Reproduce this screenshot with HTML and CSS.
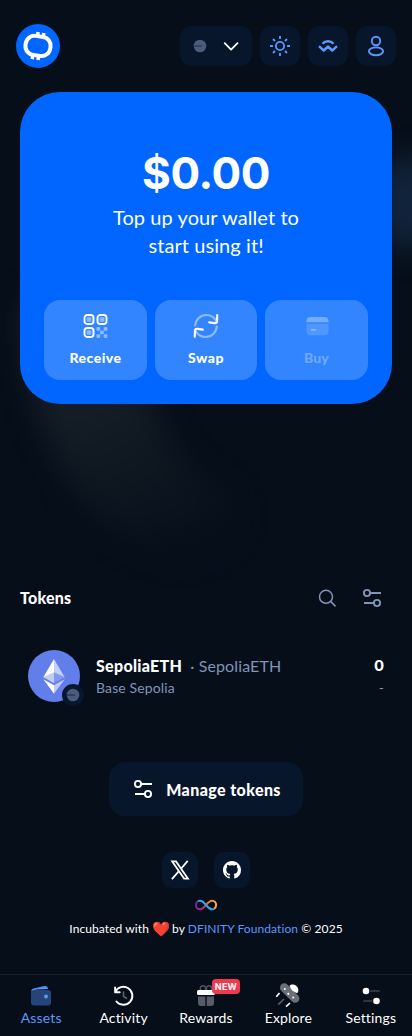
FILE: index.html
```html
<!DOCTYPE html>
<html lang="en">
<head>
<meta charset="utf-8">
<meta name="viewport" content="width=device-width, initial-scale=1">
<title>Wallet</title>
<link rel="stylesheet" href="styles.css">
</head>
<body>
<div class="app">
  <svg class="glow" aria-hidden="true" width="412" height="700" viewBox="0 0 412 700" fill="none">
    <defs>
      <filter id="soft" x="-100%" y="-100%" width="300%" height="300%" color-interpolation-filters="sRGB"><feGaussianBlur stdDeviation="14"/></filter>
      <linearGradient id="fade" gradientUnits="userSpaceOnUse" x1="80" y1="400" x2="150" y2="560"><stop offset="0" stop-color="#151e27"/><stop offset=".45" stop-color="#0f1821"/><stop offset="1" stop-color="#070f1b"/></linearGradient>
    </defs>
    <path d="M20 300H142C140 400 165 460 225 490C265 530 200 580 130 540C60 500 25 410 20 300Z" fill="url(#fade)" filter="url(#soft)"/>
    <ellipse cx="412" cy="203" rx="42" ry="47" fill="#11233a" filter="url(#soft)"/>
  </svg>
  <header class="header">
    <a class="logo" href="#">
      <svg width="44" height="44" viewBox="0 0 44 44" fill="none" stroke="#fff">
        <rect x="9.500" y="12.300" width="25" height="19.200" rx="8.800" transform="rotate(8 22 22)" stroke-width="4"/>
        <path d="M22.100 8L21.500 12.500M27.800 9L27.100 13.500M17 31L16.200 35.200M22.700 31.500L22 36" stroke-width="3.500"/>
      </svg>
    </a>
    <div class="header-actions">
      <button class="chip chip-wide">
        <svg width="22" height="22" viewBox="0 0 22 22"><circle cx="11" cy="11" r="10.500" fill="#08152a" stroke="#0b1a31"/><circle cx="11" cy="11" r="6.300" fill="#4b5b7a"/><path d="M5 11h8" stroke="#2c3b58" stroke-width="1.500"/></svg>
        <svg width="20" height="20" viewBox="0 0 20 20" fill="none" stroke="#fff" stroke-width="1.800" stroke-linecap="round" stroke-linejoin="round"><path d="M3.700 7.200l6.400 6.400 6.400-6.400"/></svg>
      </button>
      <button class="chip">
        <svg width="24" height="24" viewBox="0 0 24 24" fill="none" stroke="#5c97fc" stroke-width="1.900"><circle cx="12" cy="12" r="4.100"/><path d="M12 2v3M12 19v3M2 12h3M19 12h3M5 5l2 2M17 17l2 2M5 19l2-2M17 7l2-2"/></svg>
      </button>
      <button class="chip">
        <svg width="24" height="24" viewBox="0 0 24 24" fill="none" stroke="#5c97fc" stroke-width="2.400" stroke-linejoin="round"><path d="M3 12.200L7.700 16.500L12 12.500L16.300 16.500L21 12.200M6.400 9.700C9.400 6.500 14.600 6.500 17.600 9.700"/></svg>
      </button>
      <button class="chip">
        <svg width="24" height="24" viewBox="0 0 24 24" fill="none" stroke="#5c97fc" stroke-width="1.900"><circle cx="12" cy="7" r="4.200"/><ellipse cx="12" cy="17.300" rx="7.100" ry="3.900"/></svg>
      </button>
    </div>
  </header>

  <section class="hero">
    <div class="balance">$0.00</div>
    <p class="hint">Top up your wallet to<br>start using it!</p>
    <div class="actions">
      <button class="action">
        <svg width="28" height="28" viewBox="0 0 28 28" fill="none"><g stroke="#fff" stroke-width="1.900"><rect x="2.500" y="3" width="9" height="9" rx="2.800"/><rect x="15.500" y="3" width="9" height="9" rx="2.800"/><rect x="2.500" y="16" width="9" height="9" rx="2.800"/></g><g fill="#fff" fill-opacity=".45"><rect x="4.700" y="5.200" width="4.600" height="4.600" rx="1"/><rect x="17.700" y="5.200" width="4.600" height="4.600" rx="1"/><rect x="4.700" y="18.200" width="4.600" height="4.600" rx="1"/><rect x="14.500" y="15" width="3.700" height="3.700" rx=".8"/><rect x="21.700" y="15" width="3.700" height="3.700" rx=".8"/><rect x="18.100" y="18.600" width="3.700" height="3.700" rx=".8"/><rect x="14.500" y="22.200" width="3.700" height="3.700" rx=".8"/><rect x="21.700" y="22.200" width="3.700" height="3.700" rx=".8"/></g></svg>
        <span>Receive</span>
      </button>
      <button class="action">
        <svg width="28" height="28" viewBox="0 0 28 28" fill="none" stroke="#fff" stroke-width="2.200" stroke-linecap="round" stroke-linejoin="round"><path stroke-opacity=".45" d="M3.200 13.500C3.600 7.500 8.500 3 14.300 3C18.700 3 22.500 5.500 24.300 9.200M24.800 14.500C24.400 20.500 19.500 25 13.700 25C9.300 25 5.500 22.500 3.700 18.800"/><path d="M25.200 3.200L25 9.800Q24.700 11.500 22.500 11.200L17.200 10.300M2.800 24.800L3 18.200Q3.300 16.500 5.500 16.800L10.800 17.700"/></svg>
        <span>Swap</span>
      </button>
      <button class="action disabled">
        <svg width="28" height="28" viewBox="0 0 28 28" fill="#fff"><path fill-opacity=".32" d="M3.500 9.200Q3.500 5 7.700 5H21.300Q25.500 5 25.500 9.200V10.200H3.500Z"/><path fill-opacity=".14" d="M3.500 11.800H25.500V19Q25.500 23.200 21.300 23.200H7.700Q3.500 23.200 3.500 19Z"/><rect x="8" y="17" width="5" height="1.700" rx=".8" fill-opacity=".35"/></svg>
        <span>Buy</span>
      </button>
    </div>
  </section>

  <section class="tokens">
    <div class="tokens-head">
      <h2>Tokens</h2>
      <div class="tools">
        <svg width="24" height="24" viewBox="0 0 24 24" fill="none" stroke="#8094b8" stroke-width="1.500" stroke-linecap="round"><circle cx="11" cy="10.800" r="6.500"/><path d="M15.800 15.600l4.300 4.300"/></svg>
        <svg width="24" height="24" viewBox="0 0 24 24" fill="none" stroke="#8094b8" stroke-width="1.900"><circle cx="7" cy="7" r="3.100"/><path d="M10 7h11M14 17H4"/><circle cx="17" cy="17" r="3.100"/></svg>
      </div>
    </div>
    <div class="token">
      <div class="token-icon">
        <svg width="52" height="52" viewBox="0 0 52 52"><circle cx="26" cy="26" r="26" fill="#627eea"/><path d="M26 9v19.200l-10.700-1z" fill="#fff"/><path d="M26 9v19.200l10.700-1z" fill="#c5d0f8"/><path d="M26 22.300v11L15.300 27.100z" fill="#c1ccf7"/><path d="M26 22.300v11l10.700-6.200z" fill="#8299ee"/><path d="M26 35.300v8.400L15.300 29.200z" fill="#fff"/><path d="M26 35.300v8.400l10.700-14.500z" fill="#c1ccf7"/></svg>
        <svg class="badge" width="22" height="22" viewBox="0 0 22 22"><circle cx="11" cy="11" r="11" fill="#08172d"/><circle cx="11" cy="11" r="6.300" fill="#4b5b7a"/><path d="M5 11h8" stroke="#26344f" stroke-width="1.500"/></svg>
      </div>
      <div class="token-main">
        <div class="token-line"><span class="token-name">SepoliaETH</span><span class="token-alt">· SepoliaETH</span></div>
        <div class="token-net">Base Sepolia</div>
      </div>
      <div class="token-value">
        <div class="amount">0</div>
        <div class="fiat">-</div>
      </div>
    </div>
    <button class="manage">
      <svg width="24" height="24" viewBox="0 0 24 24" fill="none" stroke="#fff" stroke-width="1.900"><circle cx="7" cy="7" r="3.100"/><path d="M10 7h11M14 17H4"/><circle cx="17" cy="17" r="3.100"/></svg>
      <span>Manage tokens</span>
    </button>
  </section>

  <footer class="footer">
    <div class="social">
      <a href="#"><svg width="20" height="20" viewBox="0 0 20 20" fill="none" stroke="#fff"><path d="M2.200 1.400H6L17.900 18.600H14.100Z" stroke-width="1.800"/><path d="M17.700.8L11.200 8.500M8.700 11.400L1.900 19.200" stroke-width="1.800"/></svg></a>
      <a href="#"><svg width="18" height="18" viewBox="0 0 16 16" fill="#fff"><path d="M8 0C3.580 0 0 3.580 0 8c0 3.540 2.290 6.530 5.470 7.590.4.070.55-.17.55-.38 0-.19-.01-.82-.01-1.490-2.010.37-2.530-.49-2.690-.94-.09-.23-.48-.94-.82-1.130-.28-.15-.68-.52-.01-.53.63-.01 1.080.58 1.230.82.72 1.210 1.870.87 2.330.66.07-.52.28-.87.51-1.070-1.780-.2-3.640-.89-3.640-3.950 0-.87.31-1.590.82-2.150-.08-.2-.36-1.020.08-2.120 0 0 .67-.21 2.200.82.64-.18 1.320-.27 2-.27s1.360.09 2 .27c1.530-1.040 2.200-.82 2.200-.82.44 1.100.16 1.920.08 2.120.51.56.82 1.270.82 2.150 0 3.070-1.870 3.750-3.650 3.950.29.25.54.73.54 1.480 0 1.070-.01 1.930-.01 2.200 0 .21.15.46.55.38A8.010 8.010 0 0 0 16 8c0-4.420-3.580-8-8-8z"/></svg></a>
    </div>
    <svg class="infinity" width="24" height="12" viewBox="0 0 24 12" fill="none" stroke-width="2">
      <defs><linearGradient id="ga" x1="0" x2="1"><stop offset="0" stop-color="#6a2c9c"/><stop offset="1" stop-color="#ed1e79"/></linearGradient><linearGradient id="gb" x1="0" x2="1"><stop offset="0" stop-color="#f15a24"/><stop offset="1" stop-color="#fbb03b"/></linearGradient></defs>
      <path d="M12 6C9.500 9 8.200 10.300 6 10.300C3.500 10.300 1.900 8.400 1.900 6C1.900 4.300 2.700 2.900 4 2.200" stroke="url(#ga)"/>
      <path d="M12 6C14.500 3 15.800 1.700 18 1.700C20.500 1.700 22.100 3.600 22.100 6C22.100 7.700 21.300 9.100 20 9.800" stroke="url(#gb)"/>
      <path d="M4 2.200C7 .7 9 2.400 12 6C15 9.600 17 11.300 20 9.800" stroke="#29abe2"/>
    </svg>
    <p class="credit"><span>Incubated with</span><span class="heart">❤️</span><span>by <a href="#">DFINITY Foundation</a> © 2025</span></p>
  </footer>

  <nav class="nav">
    <a class="active" href="#">
      <svg width="24" height="24" viewBox="0 0 24 24"><rect x="2" y="6" width="20" height="15.500" rx="3" fill="#254579"/><path d="M2 7.500Q2.100 5 4.500 4.500L15.500 2.100Q18.200 1.600 19 4.200L19.200 5Q10 5.300 5.500 5.900Q3 6.200 2 7.500Z" fill="#5290fb"/><circle cx="17" cy="12.500" r="2" fill="#5c97fc"/></svg>
      <span>Assets</span>
    </a>
    <a href="#">
      <svg width="24" height="24" viewBox="0 0 24 24" fill="none" stroke="#fff" stroke-width="1.900" stroke-linecap="round" stroke-linejoin="round"><path d="M3.200 8A9 9 0 1 1 4.400 17.500M3.100 3.500V8.200H7.700"/><path d="M11.500 8v4.500l3 1.800" stroke="#5a616d" stroke-width="1.600"/></svg>
      <span>Activity</span>
    </a>
    <a href="#">
      <span class="nav-icon"><svg width="24" height="24" viewBox="0 0 24 24"><g fill="none" stroke="#4b525e" stroke-width="1.500"><circle cx="9" cy="4.500" r="2.700"/><circle cx="15" cy="4.500" r="2.700"/></g><path d="M4 12.500H11.300V22H7Q4 22 4 19ZM12.700 12.500H20V19Q20 22 17 22H12.700Z" fill="#565d68"/><rect x="3" y="6" width="18" height="5" rx="1.500" fill="#fff"/></svg><b class="new">NEW</b></span>
      <span>Rewards</span>
    </a>
    <a href="#">
      <svg class="rocket" width="24" height="24" viewBox="0 0 24 24"><rect x="1.700" y="4.800" width="24" height="8.600" rx="4.300" transform="rotate(45 13.700 9.100)" fill="#6b7078"/><path d="M13.500 1.800C15.500 -.2 18.700 .2 20.700 2.300C22.700 4.300 23 7.500 21.200 9.300C17.500 8 14.500 5.500 13.500 1.800Z" fill="#fff"/><g fill="#fff"><circle cx="8.800" cy="5" r="1"/><circle cx="12.300" cy="9.800" r="1.100"/><circle cx="17.200" cy="13.500" r="1"/></g><path d="M3.500 9L.3 12.800M14 19L10 22.700" stroke="#fff" stroke-width="1.700"/><path d="M8 15L2.200 20.600" stroke="#565d68" stroke-width="1.700"/></svg>
      <span>Explore</span>
    </a>
    <a href="#">
      <svg width="24" height="24" viewBox="0 0 24 24"><circle cx="7" cy="7" r="3.300" fill="#fff"/><circle cx="17.500" cy="17" r="3.300" fill="#fff"/><path d="M12 7h8M5 17h7.500" stroke="#3f4650" stroke-width="1.700" stroke-linecap="round"/></svg>
      <span>Settings</span>
    </a>
  </nav>
</div>
</body>
</html>
```
FILE: styles.css
```css
* { box-sizing: border-box; }
body { margin: 0; background: #060e1a; color: #fff; font-family: Lato, "Noto Sans", sans-serif; font-variant-ligatures: none; }
a { color: inherit; text-decoration: none; }
button { border: 0; padding: 0; color: inherit; font: inherit; }
svg { display: block; flex: none; }
.app { position: relative; width: 412px; height: 1036px; overflow: hidden; display: flex; flex-direction: column; isolation: isolate; }
.glow { position: absolute; top: 0; left: 0; z-index: -1; }
.header { display: flex; justify-content: space-between; align-items: center; padding: 24px 16px 0; height: 68px; }
.logo { width: 44px; height: 44px; border-radius: 50%; background: #0066ff; }
.header-actions { display: flex; gap: 8px; }
.chip { width: 40px; height: 40px; border-radius: 12px; background: #08162b; display: flex; align-items: center; justify-content: center; }
.chip-wide { width: 72px; gap: 10px; padding-right: 2px; }
.hero { margin: 24px 20px 0; height: 312px; border-radius: 40px; background: #0066ff; padding: 51px 24px 24px; display: flex; flex-direction: column; text-align: center; }
.balance { font: 700 44px/60px Inter, sans-serif; letter-spacing: -0.4px; }
.hint { margin: 0; font-size: 20px; line-height: 28px; letter-spacing: 0.08px; }
.actions { display: grid; grid-template-columns: 103px 1fr 103px; gap: 8px; margin-top: auto; }
.action { height: 80px; border-radius: 16px; background: #3385ff; display: flex; flex-direction: column; align-items: center; padding-top: 12px; gap: 8px; font-size: 14px; line-height: 20px; font-weight: 900; letter-spacing: 0.5px; }
.disabled { color: #70a9ff; }
.disabled span { letter-spacing: 0.1px; }
.tokens { display: flex; flex-direction: column; padding: 0 20px; margin-top: 178px; }
.tokens-head { display: flex; align-items: center; justify-content: space-between; height: 32px; }
.tokens-head h2 { margin: 0; font-size: 16px; line-height: 24px; font-weight: 900; letter-spacing: 0.2px; }
.tools { display: flex; gap: 21px; }
.token { display: flex; align-items: center; gap: 16px; margin-top: 36px; padding: 0 8px; height: 52px; }
.tools { padding-right: 8px; }
.token-icon { position: relative; }
.badge { position: absolute; right: -4px; bottom: -4px; }
.token-main { flex: 1; }
.token-line { display: flex; gap: 8px; font-size: 16px; line-height: 24px; }
.token-name, .amount { font-weight: 900; }
.token-name { letter-spacing: 0.3px; }
.token-alt, .token-net, .fiat { color: #8094b8; letter-spacing: 0.12px; }
.token-net, .fiat { font-size: 14px; line-height: 20px; }
.token-value { text-align: right; }
.amount { font: 700 15px/24px Inter, sans-serif; }
.manage { align-self: center; margin-top: 60px; width: 194px; height: 54px; border-radius: 16px; background: #08162b; display: flex; align-items: center; justify-content: center; gap: 11px; font-size: 16px; font-weight: 900; letter-spacing: 0.4px; }
.footer { display: flex; flex-direction: column; align-items: center; margin-top: 36px; }
.social { display: flex; gap: 16px; }
.social a { width: 36px; height: 36px; border-radius: 10px; background: #08162b; display: flex; align-items: center; justify-content: center; }
.infinity { margin-top: 11px; }
.credit { display: flex; align-items: center; margin: 8px 0 0; font-size: 12px; line-height: 20px; letter-spacing: 0.09px; white-space: nowrap; }
.credit a { color: #5c97fc; }
.heart { font-size: 14.5px; line-height: 20px; padding: 0 2px 0 3px; letter-spacing: 0; }
.nav { margin-top: auto; height: 62px; border-top: 1px solid #19212c; display: grid; grid-template-columns: repeat(5, 1fr); }
.nav a { display: flex; flex-direction: column; align-items: center; padding-top: 9px; font-size: 14px; line-height: 20px; letter-spacing: 0.15px; }
.nav .active { color: #5c97fc; }
.nav-icon { position: relative; }
.rocket { overflow: visible; }
.new { position: absolute; left: 18px; top: -5px; width: 28px; height: 15px; border-radius: 4px; background: #f0384f; font: 700 9px/15px Inter, sans-serif; letter-spacing: 0.2px; text-align: center; }
```
